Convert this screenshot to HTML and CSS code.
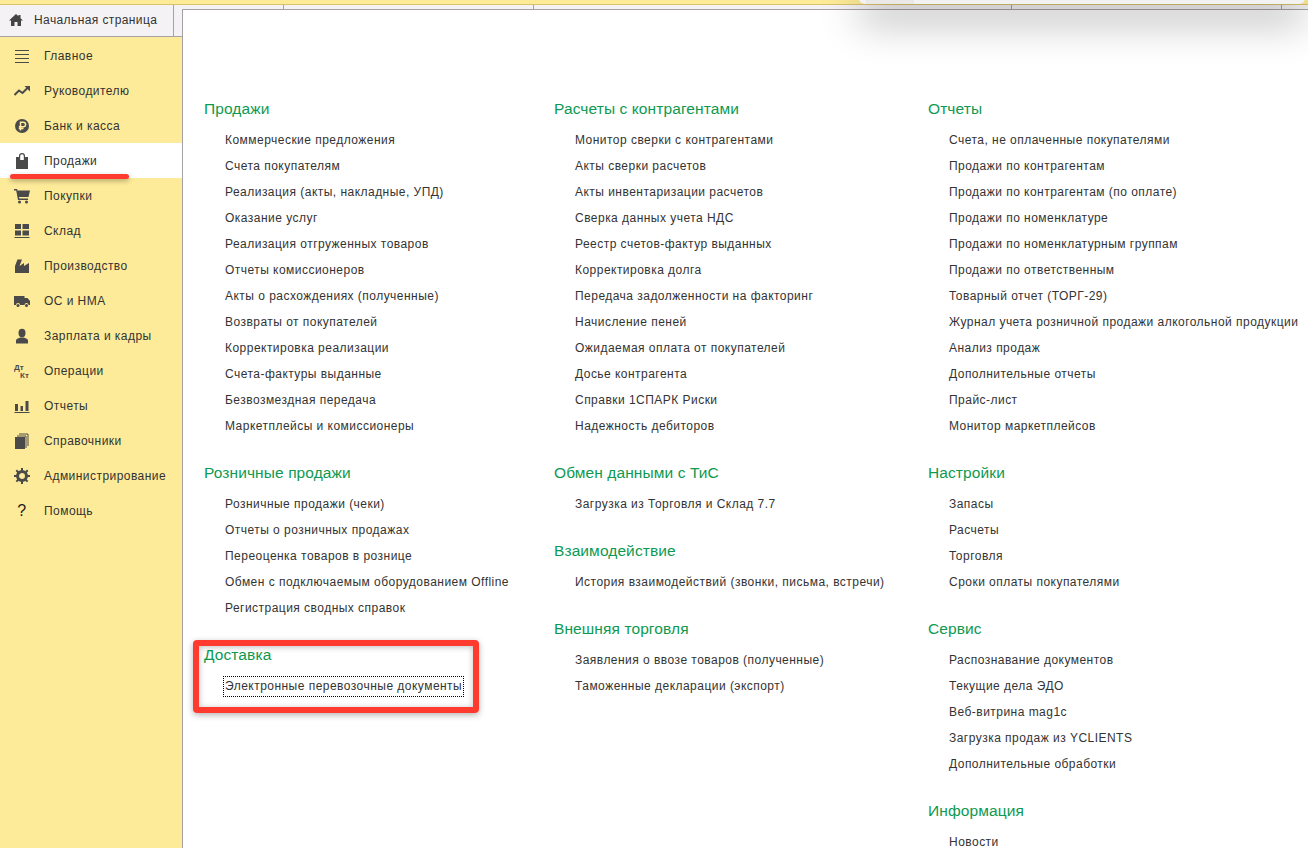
FILE: index.html
```html
<!DOCTYPE html>
<html lang="ru">

<head>
    <meta charset="UTF-8">
    <meta name="viewport" content="width=device-width, initial-scale=1.0">
    <title>Продажи</title>
    <link rel="stylesheet" href="styles.css">
</head>

<body>
    <header class="topbar"></header>

    <div class="layout">
        <aside class="side">
            <div class="home-tab">
                <svg class="home-icon" viewBox="0 0 14 12"><path d="M7 0 L9.5 2.3 V1 H11.5 V4.2 L14 6.5 H12 V12 H8.5 V8 H5.5 V12 H2 V6.5 H0 Z"/></svg>
                <span>Начальная страница</span>
            </div>
            <nav class="menu">
                <a class="menu-item">
                    <svg class="icon" viewBox="0 0 16 16"><path d="M1 2.5H15M1 6.5H15M1 10.5H15M1 14.5H15" fill="none" stroke="#4a4a4a"/></svg>
                    Главное
                </a>
                <a class="menu-item">
                    <svg class="icon" viewBox="0 0 16 16"><path d="M0.5 12 L5 7.5 L8.5 10 L14 4.5" fill="none" stroke="#4a4a4a" stroke-width="2"/><path d="M10.5 3H16V8.5Z"/></svg>
                    Руководителю
                </a>
                <a class="menu-item">
                    <svg class="icon" viewBox="0 0 16 16"><circle cx="8" cy="8" r="7"/><path d="M6.5 12.5V4.2H9.3A2.2 2.2 0 0 1 9.3 8.8H4.8M4.8 10.6H9.5" fill="none" stroke="#fdeb99" stroke-width="1.5"/></svg>
                    Банк и касса
                </a>
                <a class="menu-item active">
                    <svg class="icon" viewBox="0 0 16 16"><path d="M2 4H5V3A3 3 0 0 1 11 3V4H14V16H2ZM6.200 7H9.800V3A1.800 1.800 0 0 0 6.200 3Z" fill-rule="evenodd"/></svg>
                    Продажи
                </a>
                <a class="menu-item">
                    <svg class="icon" viewBox="0 0 16 16"><path d="M0 1H3L3.5 2.5H16L14.5 9H5L5.3 10.5H14V12H4L2.2 2.5H0Z"/><circle cx="5.5" cy="14" r="1.5"/><circle cx="12.5" cy="14" r="1.5"/></svg>
                    Покупки
                </a>
                <a class="menu-item">
                    <svg class="icon" viewBox="0 0 16 16"><path d="M1 1H7V6H1ZM8.500 1H15V6H8.500ZM1 7.500H7V12.500H1ZM8.500 7.500H15V12.500H8.500ZM0.500 14H15.500V15H0.500Z"/></svg>
                    Склад
                </a>
                <a class="menu-item">
                    <svg class="icon" viewBox="0 0 16 16"><path d="M1 15V8L3.500 1.500H8L5.500 8L10 5V8L15 5V15Z"/></svg>
                    Производство
                </a>
                <a class="menu-item">
                    <svg class="icon" viewBox="0 0 16 16"><path d="M0 3H10.500V5H13.500L16 8V12H14.500A2 2 0 0 0 10.500 12H6A2 2 0 0 0 2 12H0Z"/><circle cx="4" cy="12.500" r="1.500"/><circle cx="12.500" cy="12.500" r="1.500"/></svg>
                    ОС и НМА
                </a>
                <a class="menu-item">
                    <svg class="icon" viewBox="0 0 16 16"><ellipse cx="8" cy="5" rx="3.500" ry="4.200"/><path d="M2 15.500V12.500C2 11 4 10.500 6 9.500H10C12 10.500 14 11 14 12.500V15.500Z"/></svg>
                    Зарплата и кадры
                </a>
                <a class="menu-item">
                    <svg class="icon" viewBox="0 0 16 16"><text class="icon-text" x="0" y="7">Дт</text><text class="icon-text" x="6" y="15">Кт</text></svg>
                    Операции
                </a>
                <a class="menu-item">
                    <svg class="icon" viewBox="0 0 16 16"><path d="M1 6H4V13H1ZM6.500 8H9V13H6.500ZM11.500 3H14.500V13H11.500ZM0.500 14H15.500V15H0.500Z"/></svg>
                    Отчеты
                </a>
                <a class="menu-item">
                    <svg class="icon" viewBox="0 0 16 16"><path d="M1 4H11V16H1Z"/><path d="M12 15V3H3M14 13V1H5" fill="none" stroke="#4a4a4a"/></svg>
                    Справочники
                </a>
                <a class="menu-item">
                    <svg class="icon" viewBox="0 0 16 16"><circle cx="8" cy="8" r="4.500" fill="none" stroke="#4a4a4a" stroke-width="3"/><path d="M8 0V16M0 8H16M2.300 2.300L13.700 13.700M13.700 2.300L2.300 13.700" stroke="#4a4a4a" stroke-width="2" stroke-dasharray="3 10 3"/></svg>
                    Администрирование
                </a>
                <a class="menu-item">
                    <span class="icon help">?</span>
                    Помощь
                </a>
            </nav>
        </aside>

        <main class="main">
            <div class="tab-lines">
                <i style="left: 100px"></i>
                <i style="left: 350px"></i>
                <i style="left: 828px"></i>
                <i style="left: 1098px"></i>
            </div>
            <div class="columns">
                <div class="col col-1">
                    <section class="group">
                        <h2>Продажи</h2>
                        <a>Коммерческие предложения</a>
                        <a>Счета покупателям</a>
                        <a>Реализация (акты, накладные, УПД)</a>
                        <a>Оказание услуг</a>
                        <a>Реализация отгруженных товаров</a>
                        <a>Отчеты комиссионеров</a>
                        <a>Акты о расхождениях (полученные)</a>
                        <a>Возвраты от покупателей</a>
                        <a>Корректировка реализации</a>
                        <a>Счета-фактуры выданные</a>
                        <a>Безвозмездная передача</a>
                        <a>Маркетплейсы и комиссионеры</a>
                    </section>
                    <section class="group">
                        <h2>Розничные продажи</h2>
                        <a>Розничные продажи (чеки)</a>
                        <a>Отчеты о розничных продажах</a>
                        <a>Переоценка товаров в рознице</a>
                        <a>Обмен с подключаемым оборудованием Offline</a>
                        <a>Регистрация сводных справок</a>
                    </section>
                    <section class="group">
                        <h2>Доставка</h2>
                        <a><span class="focused">Электронные перевозочные документы</span></a>
                    </section>
                </div>
                <div class="col col-2">
                    <section class="group">
                        <h2>Расчеты с контрагентами</h2>
                        <a>Монитор сверки с контрагентами</a>
                        <a>Акты сверки расчетов</a>
                        <a>Акты инвентаризации расчетов</a>
                        <a>Сверка данных учета НДС</a>
                        <a>Реестр счетов-фактур выданных</a>
                        <a>Корректировка долга</a>
                        <a>Передача задолженности на факторинг</a>
                        <a>Начисление пеней</a>
                        <a>Ожидаемая оплата от покупателей</a>
                        <a>Досье контрагента</a>
                        <a>Справки 1СПАРК Риски</a>
                        <a>Надежность дебиторов</a>
                    </section>
                    <section class="group">
                        <h2>Обмен данными с ТиС</h2>
                        <a>Загрузка из Торговля и Склад 7.7</a>
                    </section>
                    <section class="group">
                        <h2>Взаимодействие</h2>
                        <a>История взаимодействий (звонки, письма, встречи)</a>
                    </section>
                    <section class="group">
                        <h2>Внешняя торговля</h2>
                        <a>Заявления о ввозе товаров (полученные)</a>
                        <a>Таможенные декларации (экспорт)</a>
                    </section>
                </div>
                <div class="col">
                    <section class="group">
                        <h2>Отчеты</h2>
                        <a>Счета, не оплаченные покупателями</a>
                        <a>Продажи по контрагентам</a>
                        <a>Продажи по контрагентам (по оплате)</a>
                        <a>Продажи по номенклатуре</a>
                        <a>Продажи по номенклатурным группам</a>
                        <a>Продажи по ответственным</a>
                        <a>Товарный отчет (ТОРГ-29)</a>
                        <a>Журнал учета розничной продажи алкогольной продукции</a>
                        <a>Анализ продаж</a>
                        <a>Дополнительные отчеты</a>
                        <a>Прайс-лист</a>
                        <a>Монитор маркетплейсов</a>
                    </section>
                    <section class="group">
                        <h2>Настройки</h2>
                        <a>Запасы</a>
                        <a>Расчеты</a>
                        <a>Торговля</a>
                        <a>Сроки оплаты покупателями</a>
                    </section>
                    <section class="group">
                        <h2>Сервис</h2>
                        <a>Распознавание документов</a>
                        <a>Текущие дела ЭДО</a>
                        <a>Веб-витрина mag1c</a>
                        <a>Загрузка продаж из YCLIENTS</a>
                        <a>Дополнительные обработки</a>
                    </section>
                    <section class="group">
                        <h2>Информация</h2>
                        <a>Новости</a>
                    </section>
                </div>
            </div>
        </main>
    </div>

    <!-- things laid over the screen -->
    <div class="over-window"><div class="over-window-tab"></div></div>
    <div class="mark-line"></div>
    <div class="mark-box"></div>
</body>

</html>
```

FILE: styles.css
```css
* {
    box-sizing: border-box;
    margin: 0;
    padding: 0;
}

body {
    font-family: "Liberation Sans", Arial, sans-serif;
    font-size: 12px;
    color: #333;
    height: 848px;
    overflow: hidden;
    position: relative;
    background: #f5f2f5;
}

.topbar {
    height: 5px;
    background: #fdeb99;
    border-bottom: 1px solid #d9c36b;
}

.layout {
    display: flex;
    height: 843px;
}

.side {
    width: 182px;
    flex-shrink: 0;
    display: flex;
    flex-direction: column;
}

.home-tab {
    width: 174px;
    height: 32px;
    flex-shrink: 0;
    display: flex;
    align-items: center;
    gap: 11px;
    padding: 0 0 2px 9px;
    border-right: 1px solid #a5a1a5;
    border-bottom: 1px solid #a5a1a5;
    letter-spacing: .4px;
}

.home-icon {
    width: 14px;
    height: 12px;
    fill: #444;
}

.menu {
    flex: 1;
    background: #fdeb99;
    border-top: 1px solid #a5a1a5;
    margin-top: -1px;
    padding-top: 1px;
}

.menu-item {
    height: 35px;
    display: flex;
    align-items: center;
    gap: 14px;
    padding-left: 14px;
    letter-spacing: .45px;
}

.menu-item.active {
    background: #fff;
}

.icon {
    width: 16px;
    height: 16px;
    flex-shrink: 0;
    fill: #4a4a4a;
}

.icon-text {
    font-size: 8px;
    font-weight: bold;
    letter-spacing: 0;
}

.help {
    text-align: center;
    font-size: 16px;
    line-height: 16px;
    color: #222;
}

.main {
    flex: 1;
    position: relative;
    margin-top: 4px;
    background: #fff;
    border-top: 1px solid #a5a1a5;
    border-left: 1px solid #a5a1a5;
    padding: 88px 0 0 21px;
}

.tab-lines i {
    position: absolute;
    top: -5px;
    width: 1px;
    height: 4px;
    background: #a5a1a5;
}

.columns {
    display: flex;
}

.col-1 {
    width: 350px;
    flex-shrink: 0;
}

.col-2 {
    width: 374px;
    flex-shrink: 0;
}

.col {
    white-space: nowrap;
}

.group {
    margin-bottom: 23px;
}

.group h2 {
    font-size: 15.5px;
    font-weight: normal;
    letter-spacing: .1px;
    line-height: 21px;
    color: #0d9a50;
    margin-bottom: 8px;
}

.group a {
    display: block;
    height: 26px;
    line-height: 26px;
    padding-left: 21px;
    letter-spacing: .47px;
}

.focused {
    display: inline-block;
    line-height: 19px;
    outline: 1px dotted #000;
    padding: 0 1px;
    margin-left: -1px;
}

.over-window {
    position: absolute;
    top: -20px;
    left: 859px;
    width: 446px;
    height: 24px;
    background: #f2f2f2;
    border-radius: 0 0 6px 6px;
    box-shadow: 0 18px 40px rgba(0, 0, 0, .3);
}

.over-window-tab {
    position: absolute;
    left: 7px;
    top: 0;
    width: 48px;
    height: 100%;
    background: #ebe9e7;
}

.mark-line {
    position: absolute;
    left: 10px;
    top: 174px;
    width: 119px;
    height: 5px;
    background: #ff3b30;
    border-radius: 3px;
    box-shadow: 0 2px 5px rgba(0, 0, 0, .3);
}

.mark-box {
    position: absolute;
    left: 193px;
    top: 640px;
    width: 286px;
    height: 73px;
    border: 6px solid #ff3b30;
    border-radius: 4px;
    box-shadow: 0 2px 6px rgba(0, 0, 0, .3), inset 0 1px 6px rgba(0, 0, 0, .25);
}
```
